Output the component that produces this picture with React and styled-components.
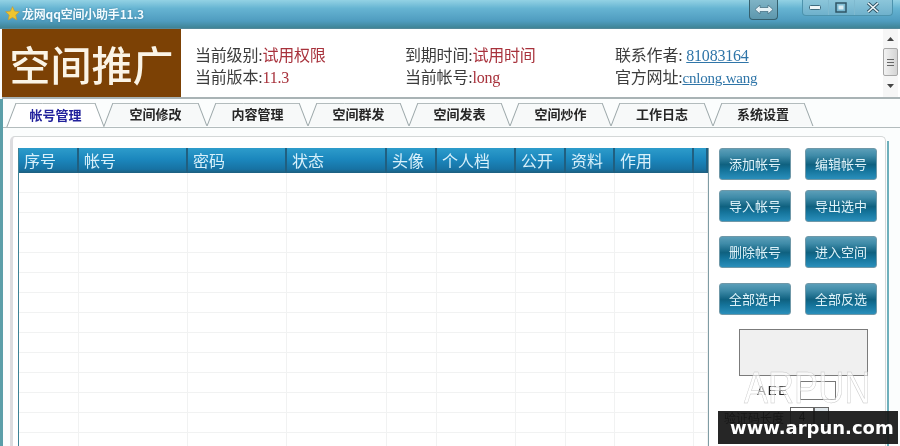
import React from 'react';
import styled, { createGlobalStyle } from 'styled-components';

const GlobalStyle = createGlobalStyle`
  html, body {
    margin: 0;
    padding: 0;
    width: 900px;
    height: 446px;
    overflow: hidden;
    background: #fff;
  }
`;

const CJK = `"Noto Sans CJK SC", "Noto Sans", sans-serif`;
const SERIF_CJK = `"Liberation Serif", "Noto Sans CJK SC", serif`;

const Window = styled.div`
  position: relative;
  width: 900px;
  height: 446px;
  overflow: hidden;
  display: flex;
  flex-direction: column;
  font-family: ${CJK};
  background: #fbfdfd;
  filter: blur(0.4px);
`;

const TitleBar = styled.div`
  flex: 0 0 29px;
  display: flex;
  align-items: flex-start;
  padding: 0 7px 0 5px;
  box-sizing: border-box;
  background: linear-gradient(#93d2e4 0, #66b4d2 30%, #4f9cbf 75%, #3f8496 100%);
  border-bottom: 1px solid #54889a;
`;

const Title = styled.div`
  display: flex;
  align-items: center;
  gap: 2px;
  height: 26px;
  font-size: 12px;
  font-weight: 700;
  letter-spacing: -0.2px;
  color: #f2fbff;
  text-shadow: 0 0 2px #2f7898;
  flex: 1;
`;

const SwapButton = styled.div`
  width: 29px;
  height: 20px;
  box-sizing: border-box;
  margin-right: 24px;
  display: flex;
  align-items: center;
  justify-content: center;
  border: 1px solid #36606e;
  border-top: 0;
  border-radius: 0 0 4px 4px;
  background: linear-gradient(#7fb4c6, #5d97ad);
`;

const WindowButtons = styled.div`
  width: 91px;
  height: 16px;
  box-sizing: border-box;
  display: flex;
  border: 1px solid #4d93ad;
  border-top: 0;
  border-radius: 0 0 4px 4px;
  background: linear-gradient(#8cc6da, #6fb1cc);
`;

const WindowButton = styled.div`
  flex: ${props => props.$grow || 1};
  display: flex;
  align-items: center;
  justify-content: center;
  border-right: ${props => (props.$last ? 'none' : '1px solid #7fb9cf')};
`;

const Header = styled.div`
  flex: 0 0 68px;
  display: flex;
  margin-left: 2px;
  background: #fff;
  border-bottom: 2px solid #a9b3b5;
`;

const Banner = styled.div`
  flex: 0 0 179px;
  display: flex;
  align-items: center;
  justify-content: center;
  background: #7c4105;
  color: #fbf4e6;
  font-size: 41px;
  font-weight: 500;
  line-height: 1;
  white-space: nowrap;
`;

const InfoGrid = styled.div`
  flex: 1;
  display: grid;
  grid-template-columns: repeat(3, 210px);
  grid-auto-rows: 22px;
  align-content: center;
  padding: 8px 0 0 14px;
  font-family: ${SERIF_CJK};
  font-size: 16px;
  letter-spacing: -0.2px;
  color: #3c3c3c;
  white-space: nowrap;
`;

const InfoItem = styled.div`
  line-height: 22px;
`;

const Value = styled.span`
  color: #a8323c;
`;

const LinkValue = styled.span`
  color: #2f75a8;
  text-decoration: underline;
  font-size: ${props => props.$size || 16}px;
`;

const Scrollbar = styled.div`
  flex: 0 0 15px;
  margin-right: 2px;
  display: flex;
  flex-direction: column;
  align-items: stretch;
  background: #f6f6f6;
`;

const ScrollArrow = styled.div`
  height: 19px;
  display: flex;
  align-items: center;
  justify-content: center;
  color: #444;
`;

const ScrollThumb = styled.div`
  height: 28px;
  box-sizing: border-box;
  display: flex;
  flex-direction: column;
  align-items: center;
  justify-content: center;
  gap: 2px;
  border: 1px solid #a8a8a8;
  border-radius: 2px;
  background: linear-gradient(90deg, #f2f2f2, #d4d4d4);
`;

const Grip = styled.span`
  width: 7px;
  height: 1px;
  background: #666;
`;

const Body = styled.div`
  flex: 1;
  min-height: 0;
  display: flex;
  flex-direction: column;
  border-left: 3px solid #5a9ea8;
`;

const TabStrip = styled.div`
  flex: 0 0 28px;
  display: flex;
  padding: 4px 0 0 4px;
  box-sizing: border-box;
  border-bottom: 1px solid #b3bcbd;
`;

const Tab = styled.div`
  position: relative;
  width: ${props => props.$w}px;
  height: ${props => (props.$active ? 24 : 23)}px;
  padding-bottom: 2px;
  box-sizing: border-box;
  display: flex;
  align-items: center;
  justify-content: center;
  font-size: 13px;
  font-weight: 700;
  color: ${props => (props.$active ? '#22229c' : '#262626')};
  z-index: ${props => (props.$active ? 2 : 1)};

  &::before,
  &::after {
    content: '';
    position: absolute;
    top: 0;
    bottom: 0;
    width: 55%;
    box-sizing: border-box;
    border-top: 1px solid #b3bcbd;
    background: ${props => (props.$active ? '#fff' : '#f7f9f9')};
    z-index: -1;
  }

  &::before {
    left: 4px;
    border-left: 1px solid #9aa6a8;
    transform: skewX(-21deg);
  }

  &::after {
    right: 4px;
    border-right: 1px solid #9aa6a8;
    transform: skewX(21deg);
  }
`;

const Content = styled.div`
  flex: 1;
  min-height: 0;
  display: flex;
  padding: 8px 0 0 7px;
`;

const Panel = styled.div`
  width: 876px;
  height: 340px;
  box-sizing: border-box;
  display: flex;
  align-items: flex-start;
  padding: 11px 0 0 5px;
  background: #fff;
  border: 1px solid #d4d8d8;
  border-left: 3px solid #dcdcdf;
  border-bottom: 0;
  border-radius: 5px 5px 0 0;
`;

const PanelEdge = styled.div`
  flex: 0 0 2px;
  margin: 5px 0 0 1px;
  background: #6fb0bc;
`;

const Table = styled.div`
  flex: 0 0 691px;
  height: 320px;
  overflow: hidden;
  box-sizing: border-box;
  border-left: 1px solid #3d8296;
  border-right: 1px solid #7f9ca4;
`;

const HeaderRow = styled.div`
  display: flex;
  height: 25px;
  background: linear-gradient(#2d9ccb 0, #1b87bd 45%, #1772a3 85%, #1e5f7e 100%);
`;

const HeaderCell = styled.div`
  flex: 0 0 ${props => props.$w}px;
  box-sizing: border-box;
  padding-left: 5px;
  font-size: 16px;
  line-height: 24px;
  color: #d8f0fa;
  border-right: 2px solid #205f80;
  white-space: nowrap;
`;

const Row = styled.div`
  display: flex;
  height: 20px;
  box-sizing: border-box;
  border-bottom: 1px solid #f1f2f2;
`;

const Cell = styled.div`
  flex: 0 0 ${props => props.$w}px;
  box-sizing: border-box;
  border-right: 1px solid #f1f2f2;
`;

const Side = styled.div`
  flex: 1;
  padding: 0 0 0 10px;
  display: flex;
  flex-direction: column;
`;

const ButtonRow = styled.div`
  display: flex;
  gap: 14px;
  margin-top: ${props => props.$mt}px;
`;

const ActionButton = styled.div`
  width: 72px;
  height: 32px;
  box-sizing: border-box;
  display: flex;
  align-items: center;
  justify-content: center;
  padding-bottom: 2px;
  font-size: 13px;
  color: #dff3fa;
  border: 1px solid #6f98a8;
  border-radius: 3px;
  background: linear-gradient(#5b9eb8 0, #3f8ba8 22%, #0f6180 52%, #14739a 70%, #2a8fbb 100%);
`;

const CaptchaBox = styled.div`
  width: 129px;
  height: 47px;
  box-sizing: border-box;
  margin: 14px 0 0 20px;
  background: #f0f0f0;
  border: 1px solid #7b7b7b;
`;

const CaptchaRow = styled.div`
  display: flex;
  align-items: center;
  margin: 5px 0 0 38px;
`;

const CaptchaText = styled.div`
  width: 43px;
  font-family: "Liberation Sans", sans-serif;
  font-size: 13px;
  letter-spacing: 2px;
  color: #222;
`;

const CaptchaInput = styled.div`
  width: 36px;
  height: 19px;
  box-sizing: border-box;
  background: #fff;
  border: 1px solid #777;
`;

const LengthRow = styled.div`
  display: flex;
  align-items: center;
  margin: 7px 0 0 5px;
  font-size: 12px;
  color: #222;
`;

const LengthLabel = styled.div`
  width: 66px;
  white-space: nowrap;
`;

const LengthInput = styled.div`
  width: 24px;
  height: 20px;
  box-sizing: border-box;
  border: 1px solid #666;
  background: #fff;
  text-align: center;
  font-family: "Liberation Sans", sans-serif;
  line-height: 19px;
`;

const Spinner = styled.div`
  width: 15px;
  height: 20px;
  box-sizing: border-box;
  border: 1px solid #666;
  background: #dfe6ea;
`;

const WatermarkOutline = styled.div`
  position: absolute;
  left: 744px;
  top: 366px;
  font-family: "Liberation Sans", sans-serif;
  font-size: 44px;
  color: rgba(255, 255, 255, 0.6);
  -webkit-text-stroke: 0.5px #c8c8c8;
  line-height: 1;
  transform: scaleX(0.82);
  transform-origin: left;
`;

const WatermarkBar = styled.div`
  position: absolute;
  left: 718px;
  top: 411px;
  width: 180px;
  height: 33px;
  padding-left: 12px;
  box-sizing: border-box;
  display: flex;
  align-items: center;
  background: rgba(22, 22, 22, 0.93);
  color: #fff;
  font-family: "DejaVu Sans", sans-serif;
  font-size: 18px;
  font-weight: 700;
  white-space: nowrap;
`;

const TABS = [
  { label: '帐号管理', w: 97, active: true },
  { label: '空间修改', w: 103 },
  { label: '内容管理', w: 101 },
  { label: '空间群发', w: 101 },
  { label: '空间发表', w: 101 },
  { label: '空间炒作', w: 101 },
  { label: '工作日志', w: 102 },
  { label: '系统设置', w: 100 },
];

const COLUMNS = [
  { label: '序号', w: 60 },
  { label: '帐号', w: 109 },
  { label: '密码', w: 99 },
  { label: '状态', w: 100 },
  { label: '头像', w: 50 },
  { label: '个人档', w: 79 },
  { label: '公开', w: 50 },
  { label: '资料', w: 49 },
  { label: '作用', w: 79 },
  { label: '', w: 14 },
];

const BUTTON_ROWS = [
  { mt: 0, labels: ['添加帐号', '编辑帐号'] },
  { mt: 10, labels: ['导入帐号', '导出选中'] },
  { mt: 14, labels: ['删除帐号', '进入空间'] },
  { mt: 15, labels: ['全部选中', '全部反选'] },
];

const ROWS = Array.from({ length: 14 }, (_, i) => i);

const StarIcon = () => (
  <svg width="15" height="15" viewBox="0 0 24 24">
    <path
      d="M12 1l3.3 7.2 7.7.9-5.7 5.3 1.6 7.8L12 18.2l-6.9 4 1.6-7.8L1 9.1l7.7-.9z"
      fill="#f0c52e"
      stroke="#c8992a"
    />
  </svg>
);

const SwapIcon = () => (
  <svg width="20" height="11" viewBox="0 0 20 11">
    <path
      d="M1 5.5L6 1v2.5h8V1l5 4.5L14 10V7.5H6V10z"
      fill="#e6f2f6"
      stroke="#4a7486"
      strokeWidth="0.8"
    />
  </svg>
);

const App = () => (
  <Window>
    <GlobalStyle />
    <TitleBar>
      <Title>
        <StarIcon />
        龙网qq空间小助手11.3
      </Title>
      <SwapButton>
        <SwapIcon />
      </SwapButton>
      <WindowButtons>
        <WindowButton>
          <svg width="12" height="6" viewBox="0 0 12 6">
            <rect x="0.5" y="0.5" width="11" height="4" rx="1" fill="#eef6f8" stroke="#3f6c80" />
          </svg>
        </WindowButton>
        <WindowButton>
          <svg width="12" height="11" viewBox="0 0 12 11">
            <rect x="1" y="1" width="10" height="9" fill="none" stroke="#2f5566" strokeWidth="1.5" />
            <rect x="3.5" y="3.5" width="5" height="4" fill="#d8ecf2" />
          </svg>
        </WindowButton>
        <WindowButton $grow={1.5} $last>
          <svg width="14" height="11" viewBox="0 0 14 11">
            <path d="M2 1l10 9M12 1L2 10" stroke="#2f5566" strokeWidth="3.4" />
            <path d="M2 1l10 9M12 1L2 10" stroke="#eef6f8" strokeWidth="1.6" />
          </svg>
        </WindowButton>
      </WindowButtons>
    </TitleBar>

    <Header>
      <Banner>空间推广</Banner>
      <InfoGrid>
        <InfoItem>当前级别:<Value>试用权限</Value></InfoItem>
        <InfoItem>到期时间:<Value>试用时间</Value></InfoItem>
        <InfoItem>联系作者: <LinkValue>81083164</LinkValue></InfoItem>
        <InfoItem>当前版本:<Value>11.3</Value></InfoItem>
        <InfoItem>当前帐号:<Value>long</Value></InfoItem>
        <InfoItem>官方网址:<LinkValue $size={15}>cnlong.wang</LinkValue></InfoItem>
      </InfoGrid>
      <Scrollbar>
        <ScrollArrow>
          <svg width="7" height="4" viewBox="0 0 7 4"><path d="M3.5 0L7 4H0z" fill="#444" /></svg>
        </ScrollArrow>
        <ScrollThumb>
          <Grip />
          <Grip />
          <Grip />
        </ScrollThumb>
        <ScrollArrow>
          <svg width="7" height="4" viewBox="0 0 7 4"><path d="M0 0h7L3.500 4z" fill="#444" /></svg>
        </ScrollArrow>
      </Scrollbar>
    </Header>

    <Body>
      <TabStrip>
        {TABS.map(tab => (
          <Tab key={tab.label} $w={tab.w} $active={tab.active}>
            {tab.label}
          </Tab>
        ))}
      </TabStrip>
      <Content>
        <Panel>
          <Table>
            <HeaderRow>
              {COLUMNS.map(col => (
                <HeaderCell key={col.w + col.label} $w={col.w}>
                  {col.label}
                </HeaderCell>
              ))}
            </HeaderRow>
            {ROWS.map(row => (
              <Row key={row}>
                {COLUMNS.map(col => (
                  <Cell key={col.w + col.label} $w={col.w} />
                ))}
              </Row>
            ))}
          </Table>
          <Side>
            {BUTTON_ROWS.map(row => (
              <ButtonRow key={row.labels[0]} $mt={row.mt}>
                {row.labels.map(label => (
                  <ActionButton key={label}>{label}</ActionButton>
                ))}
              </ButtonRow>
            ))}
            <CaptchaBox />
            <CaptchaRow>
              <CaptchaText>AEE</CaptchaText>
              <CaptchaInput />
            </CaptchaRow>
            <LengthRow>
              <LengthLabel>验证码长度</LengthLabel>
              <LengthInput>4</LengthInput>
              <Spinner />
            </LengthRow>
          </Side>
        </Panel>
        <PanelEdge />
      </Content>
    </Body>

    <WatermarkOutline>ARPUN</WatermarkOutline>
    <WatermarkBar>www.arpun.com</WatermarkBar>
  </Window>
);

export default App;
